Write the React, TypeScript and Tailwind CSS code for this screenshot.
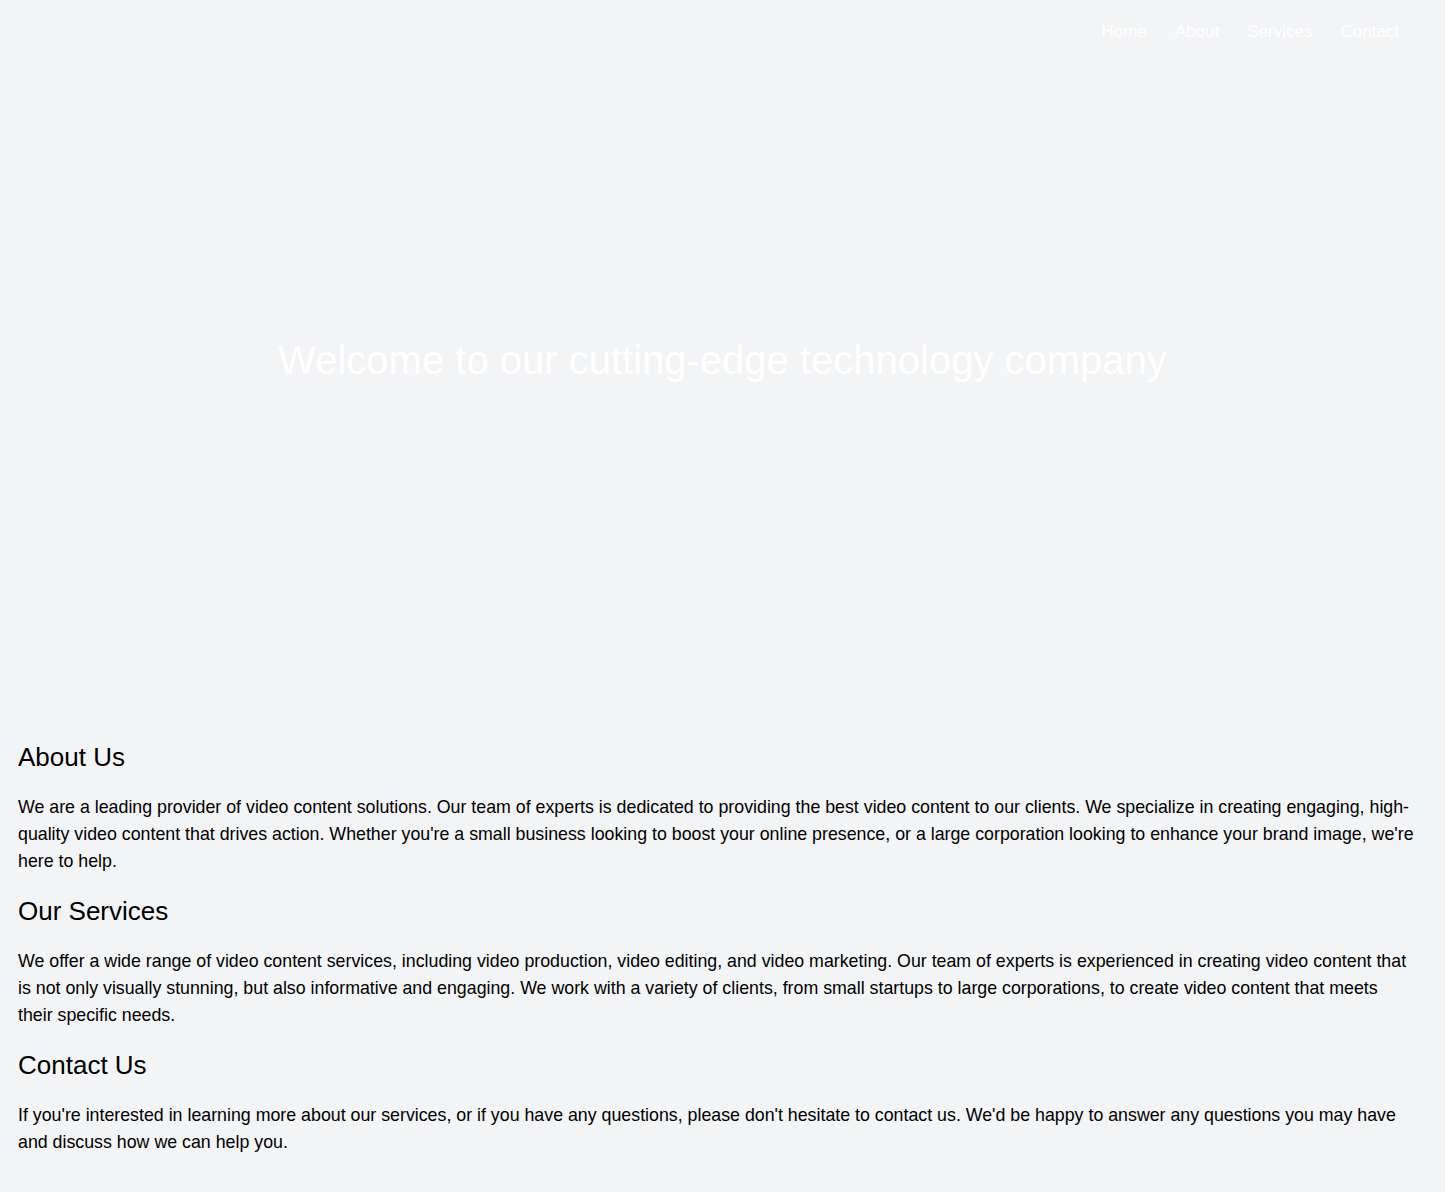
import React from 'react';

const sections = [
  {
    title: "About Us",
    body: "We are a leading provider of video content solutions. Our team of experts is dedicated to providing the best video content to our clients. We specialize in creating engaging, high-quality video content that drives action. Whether you're a small business looking to boost your online presence, or a large corporation looking to enhance your brand image, we're here to help.",
  },
  {
    title: "Our Services",
    body: "We offer a wide range of video content services, including video production, video editing, and video marketing. Our team of experts is experienced in creating video content that is not only visually stunning, but also informative and engaging. We work with a variety of clients, from small startups to large corporations, to create video content that meets their specific needs.",
  },
  {
    title: "Contact Us",
    body: "If you're interested in learning more about our services, or if you have any questions, please don't hesitate to contact us. We'd be happy to answer any questions you may have and discuss how we can help you.",
  },
];

export default function App() {
  return (
    <div className="min-h-screen bg-gray-100 text-black font-['Liberation_Sans',Arial,sans-serif]">
      {/* Hero */}
      <header className="h-[720px] flex flex-col">
        <nav className="h-16 flex justify-end items-start gap-7 pt-5 pr-[46px]">
          {["Home", "About", "Services", "Contact"].map((item) => (
            <a key={item} href="#" className="text-white text-[17px] leading-6">{item}</a>
          ))}
        </nav>
        <div className="flex-1 flex items-center justify-center pb-16">
          <h1 className="text-white text-[40px] leading-[48px]">Welcome to our cutting-edge technology company</h1>
        </div>
      </header>

      {/* Content */}
      <main className="pl-[18px] pr-[30px] pt-[21px] pb-10">
        {sections.map((s) => (
          <section key={s.title} className="mb-5">
            <h2 className="text-[26px] leading-8 mb-[21px]">{s.title}</h2>
            <p className="text-[17.8px] leading-[27px]">{s.body}</p>
          </section>
        ))}
      </main>
    </div>
  );
}
